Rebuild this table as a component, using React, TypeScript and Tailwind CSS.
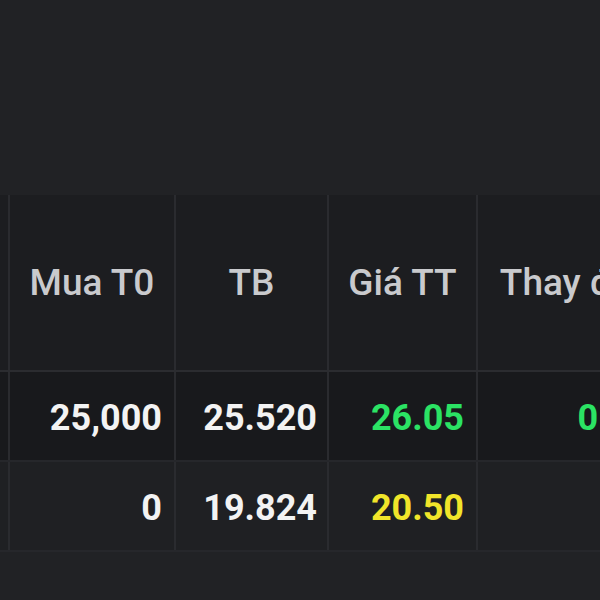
import React from 'react';

type Row = { muaT0: string; tb: string; gia: string; giaColor: string; change: string };

const rows: Row[] = [
    { muaT0: '25,000', tb: '25.520', gia: '26.05', giaColor: 'text-[#2be364]', change: '0.55' },
    { muaT0: '0', tb: '19.824', gia: '20.50', giaColor: 'text-[#f1e52a]', change: '' },
];

const cell = 'shrink-0 border-r-2 border-[#2a2b2f] flex items-center';

export default function App() {
    return (
        <div
            className="w-[600px] h-[600px] overflow-hidden bg-[#212225] flex flex-col"
            style={{ fontFamily: 'Roboto, "Liberation Sans", sans-serif' }}
        >
            <div className="h-[195px] shrink-0 bg-[#212225]" />

            {/* header */}
            <div className="flex h-[177px] shrink-0 bg-[#1c1d20] border-b-2 border-[#2b2c30] text-[37px] font-medium text-[#c9cacd]">
                <div className={`${cell} w-[10px]`} />
                <div className={`${cell} w-[166px] justify-center`}>Mua T0</div>
                <div className={`${cell} w-[153px] justify-center`}>TB</div>
                <div className={`${cell} w-[149px] justify-center`}>Giá TT</div>
                <div className={`${cell} w-[189px] justify-center whitespace-nowrap`}>Thay đổi</div>
            </div>

            {rows.map((r, i) => (
                <div
                    key={i}
                    className={`flex h-[90px] shrink-0 border-b-2 border-[#26272b] text-[36px] font-bold text-[#f3f3f3] ${
                        i === 0 ? 'bg-[#18191c]' : 'bg-[#1f2023]'
                    }`}
                >
                    <div className={`${cell} w-[10px]`} />
                    <div className={`${cell} w-[166px] justify-end pr-[12px] pt-[4px]`}>{r.muaT0}</div>
                    <div className={`${cell} w-[153px] justify-end pr-[10px] pt-[4px]`}>{r.tb}</div>
                    <div className={`${cell} w-[149px] justify-end pr-[12px] pt-[4px] ${r.giaColor}`}>{r.gia}</div>
                    <div className={`${cell} w-[189px] justify-end pr-[15px] pt-[4px] text-[#2be364]`}>{r.change}</div>
                </div>
            ))}

            <div className="flex-1 bg-[#212225]" />
        </div>
    );
}
